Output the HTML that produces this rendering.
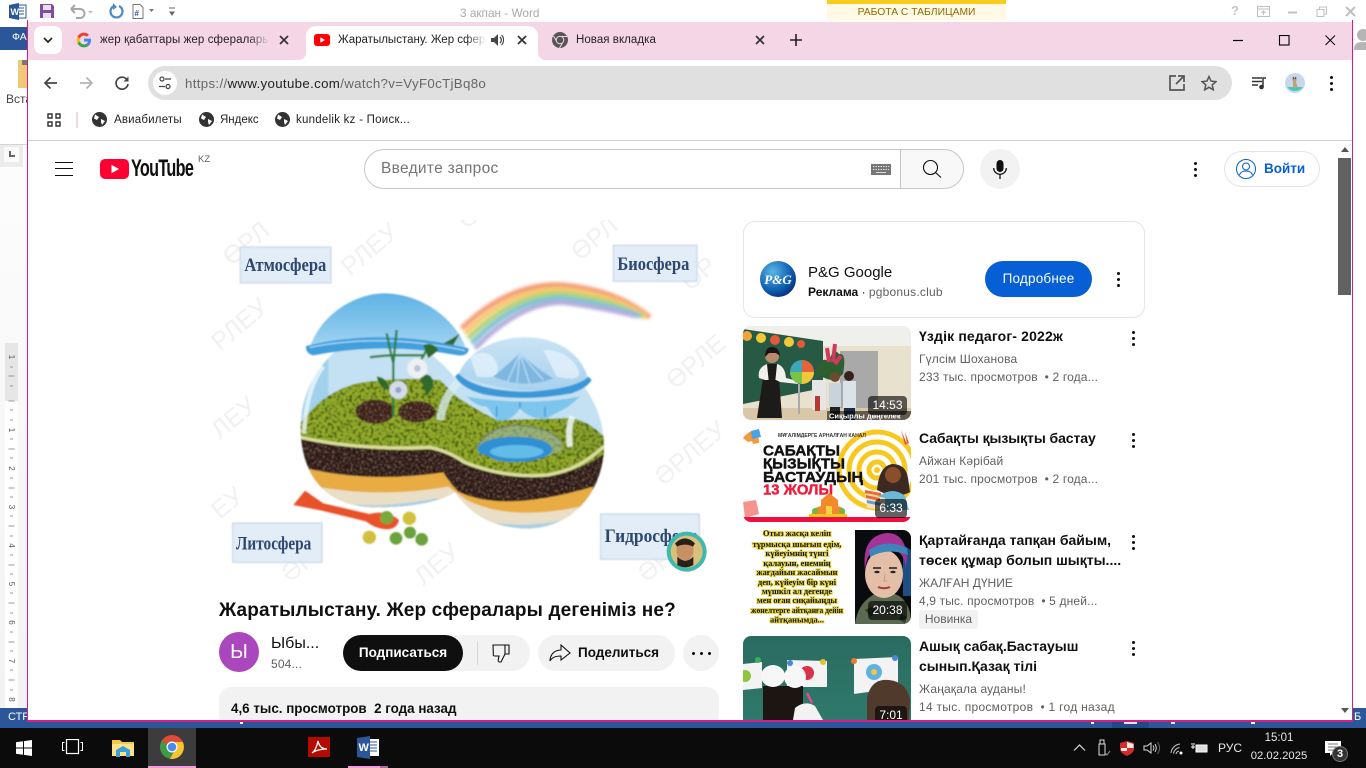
<!DOCTYPE html>
<html lang="ru"><head><meta charset="utf-8"><title>Жаратылыстану. Жер сфералары</title>
<style>
html,body{margin:0;padding:0;background:#fff}
body{position:relative;width:1366px;height:768px;overflow:hidden;font-family:"Liberation Sans","DejaVu Sans",sans-serif;color:#0f0f0f}
.a{position:absolute}
.t{position:absolute;white-space:nowrap}
svg{position:absolute;display:block;overflow:hidden}
.gr{color:#606060;font-size:12px;line-height:16px;letter-spacing:.15px}
.ti{font-size:14px;line-height:20px;font-weight:bold;color:#0f0f0f}
.dur{position:absolute;background:rgba(0,0,0,.62);color:#fff;font-size:12px;line-height:19px;height:19px;border-radius:4px;text-align:center}
.dots{position:absolute;width:3px;height:3px;background:#0f0f0f;border-radius:50%;box-shadow:0 -6px 0 #0f0f0f,0 6px 0 #0f0f0f}
</style></head><body>

<!-- Word chrome -->
<div class="a" style="left:0;top:0;width:1366px;height:22px;background:#fff"></div>
<svg style="left:9px;top:3px" width="18" height="17" viewBox="0 0 18 17"><rect x="6" y="2" width="11" height="13" fill="#fff" stroke="#2b579a"/><path d="M9 5h6M9 8h6M9 11h6" stroke="#2b579a"/><path d="M0 2 10 0v17L0 15z" fill="#2b579a"/><text x="1.5" y="12" font-size="9" font-weight="bold" fill="#fff" font-family="Liberation Sans">W</text></svg>
<svg style="left:39px;top:3px" width="16" height="16" viewBox="0 0 16 16"><path d="M1 1h12l2 2v12H1z" fill="#7d4f9e"/><rect x="4" y="2" width="8" height="5" fill="#e9dff1"/><rect x="4" y="10" width="8" height="5" fill="#e9dff1"/></svg>
<svg style="left:68px;top:3px" width="30" height="16" viewBox="0 0 30 16"><path d="M3 6h9a4 4 0 0 1 0 9H8M3 6l4-4M3 6l4 4" fill="none" stroke="#a7a7a7" stroke-width="2"/><path d="M20 8h5l-2.500 2.500z" fill="#bbb"/></svg>
<svg style="left:108px;top:3px" width="16" height="16" viewBox="0 0 16 16"><path d="M6 3a6 6 0 1 0 5 0" fill="none" stroke="#4a88c7" stroke-width="2.200"/><path d="M5 0v7l4-3z" fill="#4a88c7"/></svg>
<svg style="left:132px;top:4px" width="26" height="15" viewBox="0 0 26 15"><path d="M1 .5h7l3 3v11H1z" fill="#fff" stroke="#777"/><text x="2.500" y="12" font-size="8" font-weight="bold" fill="#2b579a" font-family="Liberation Sans">#</text><path d="M17 5h5l-2.500 3z" fill="#777"/></svg>
<svg style="left:168px;top:7px" width="9" height="10" viewBox="0 0 9 10"><path d="M1 1h6M2 5h4l-2 3z" fill="#666" stroke="#666"/></svg>
<div class="t" style="left:460px;top:6px;font-size:11.800px;line-height:14px;color:#aaa">3 акпан - Word</div>
<div class="a" style="left:827px;top:0;width:179px;height:20px;background:#fff9e6"></div>
<div class="a" style="left:827px;top:0;width:179px;height:4px;background:#f8cc1c"></div>
<div class="t" style="left:827px;width:179px;text-align:center;top:6px;font-size:10.300px;line-height:14px;color:#8a6b00">РАБОТА С ТАБЛИЦАМИ</div>
<div class="t" style="left:1231px;top:3px;font-size:13px;font-weight:bold;color:#c6c6c6">?</div>
<svg style="left:1257px;top:6px" width="110" height="13" viewBox="0 0 110 13"><rect x=".5" y=".5" width="12" height="10" fill="none" stroke="#c0c0c0"/><path d="M.5 3h12M6.500 9V5M4.500 7l2-2 2 2" fill="none" stroke="#c0c0c0"/><path d="M31 6.500h9" stroke="#c0c0c0" stroke-width="2"/><path d="M60 3.500h7v7h-7zM62.500 3.500V1h7v7H67" fill="none" stroke="#c0c0c0"/><path d="M89 1l9 9M98 1l-9 9" stroke="#c0c0c0" stroke-width="2"/></svg>

<div class="a" style="left:0;top:27px;width:27px;height:23px;background:#2b579a"></div>
<div class="t" style="left:12px;top:31px;font-size:10.500px;color:#fff">ФА</div>
<div class="a" style="left:18px;top:60px;width:9px;height:28px;background:#f0c878"></div>
<div class="a" style="left:22px;top:60px;width:5px;height:5px;background:#777"></div>
<div class="t" style="left:6px;top:92px;font-size:12px;color:#444;width:21px;overflow:hidden">Вста</div>
<div class="a" style="left:0;top:144px;width:27px;height:564px;background:linear-gradient(#fdfdfd,#f2f2f2)"></div>
<div class="a" style="left:0;top:144px;width:27px;height:1px;background:#d4d4d4"></div>
<div class="a" style="left:0;top:145px;width:23px;height:22px;background:#ececec"></div>
<div class="a" style="left:4px;top:147px;width:15px;height:15px;background:#fafafa"></div>
<div class="a" style="left:9px;top:151px;width:6px;height:6px;border-left:2px solid #666;border-bottom:2px solid #666;box-sizing:border-box"></div>
<div class="a" style="left:5px;top:343px;width:13px;height:58px;background:#e6e6e6"></div>
<div class="a" style="left:5px;top:401px;width:13px;height:307px;background:#fff"></div>
<svg style="left:5px;top:343px" width="13" height="365" viewBox="0 0 13 365" font-size="8" fill="#555" font-family="Liberation Sans"><path d="M5 24h3M3.500 33h6M5 43h3M5 67h3M5 77h3M3.500 58h6M5 96h3M3.500 106h6M5 115h3M5 135h3M3.500 145h6M5 154h3M5 173h3M3.500 183h6M5 193h3M5 212h3M3.500 222h6M5 231h3M5 250h3M3.500 260h6M5 270h3M5 289h3M3.500 299h6M5 308h3M5 327h3M3.500 337h6M5 347h3" stroke="#999"/><g text-anchor="middle"><text transform="translate(4,14) rotate(90)">1</text><text transform="translate(4,87) rotate(90)">1</text><text transform="translate(4,125.500) rotate(90)">2</text><text transform="translate(4,164) rotate(90)">3</text><text transform="translate(4,202.500) rotate(90)">4</text><text transform="translate(4,241) rotate(90)">5</text><text transform="translate(4,279.500) rotate(90)">6</text><text transform="translate(4,318) rotate(90)">7</text><text transform="translate(4,356.500) rotate(90)">8</text></g></svg>
<div class="a" style="left:0;top:708px;width:1366px;height:20px;background:#2b579a"></div>
<div class="t" style="left:8px;top:711px;font-size:11px;color:#fff">СТРА</div>
<svg style="left:1353px;top:26px" width="13" height="24" viewBox="0 0 13 24"><circle cx="10" cy="9" r="6" fill="#b5b5b5"/><path d="M1 24c0-7 4-8 9-8s6 1 6 8z" fill="#b5b5b5"/></svg>
<div class="t" style="left:1354px;top:711px;font-size:11px;color:#fff">Б</div>

<!-- Taskbar -->
<div class="a" style="left:0;top:728px;width:1366px;height:40px;background:#0b0b0b"></div>
<div class="a" style="left:148px;top:728px;width:48px;height:40px;background:#3c3c3c"></div>
<div class="a" style="left:148px;top:766px;width:48px;height:2px;background:#f49ad6"></div>
<div class="a" style="left:348px;top:766px;width:32px;height:2px;background:#f49ad6"></div>
<div class="a" style="left:380px;top:766px;width:8px;height:2px;background:#b06a9c"></div>
<svg style="left:16px;top:740px" width="16" height="16" viewBox="0 0 16 16"><path d="M0 2.300 7 1.300V7.500H0zM8 1.100 16 0V7.500H8zM0 8.500h7v6.200L0 13.700zM8 8.500h8V16L8 14.900z" fill="#fff"/></svg>
<svg style="left:62px;top:739px" width="21" height="17" viewBox="0 0 21 17"><rect x="4.500" y=".5" width="12" height="14" fill="none" stroke="#fff" stroke-width="1.200"/><path d="M2.500 3.500H.5v8h2M18.500 3.500h2v8h-2" fill="none" stroke="#fff"/></svg>
<svg style="left:112px;top:738px" width="22" height="20" viewBox="0 0 22 20"><path d="M0 2h8l2 2h12v14H0z" fill="#f2c94c"/><path d="M0 6h22v12H0z" fill="#fde28a"/><path d="M4 19V12l7-4 7 4v7h-4v-5H8v5z" fill="#3aa0d8"/></svg>
<svg style="left:160px;top:735px" width="24" height="24" viewBox="0 0 24 24"><circle cx="12" cy="12" r="12" fill="#dd4b39"/><path d="M12 12 1.600 6A12 12 0 0 0 10 23.800L15.500 12z" fill="#3a9a46"/><path d="M12 7h10.800A12 12 0 0 1 10 23.800L15.500 14z" fill="#f5c531"/><circle cx="12" cy="12" r="5.500" fill="#fff"/><circle cx="12" cy="12" r="4.300" fill="#4a8bf0"/></svg>
<svg style="left:308px;top:737px" width="22" height="20" viewBox="0 0 22 20"><rect width="22" height="20" fill="#b30b00"/><path d="M4 16c3-2 5-7 6-12 1 5 4 8 9 8-5 0-11 1-15 4z" fill="none" stroke="#fff" stroke-width="1.300"/></svg>
<svg style="left:357px;top:736px" width="23" height="23" viewBox="0 0 23 23"><rect x="9" y="3" width="13" height="17" fill="#fff"/><path d="M12 6h8M12 9h8M12 12h8M12 15h8" stroke="#2b579a"/><path d="M0 2 13 0v23L0 21z" fill="#2b579a"/><text x="1.500" y="15" font-size="11" font-weight="bold" fill="#fff" font-family="Liberation Sans">W</text></svg>
<svg style="left:1073px;top:743px" width="13" height="9" viewBox="0 0 13 9"><path d="M1 7.500 6.500 2 12 7.500" fill="none" stroke="#ddd" stroke-width="1.200"/></svg>
<svg style="left:1097px;top:739px" width="14" height="17" viewBox="0 0 14 17"><path d="M2 5h6v11H2zM3 1h4v4H3z" fill="none" stroke="#ddd"/><path d="M8 14l2 2 3-4" fill="none" stroke="#999"/></svg>
<svg style="left:1120px;top:741px" width="14" height="15" viewBox="0 0 14 15"><path d="M0 2 7 0l7 2v6c0 3-3 5-7 7-4-2-7-4-7-7z" fill="#d52b2b"/><path d="M7 1v6H1v1c0 1 0 1 .500 2H7v4zM7 7h6.500V3L7 1z" fill="#fff" opacity=".9"/></svg>
<svg style="left:1143px;top:741px" width="17" height="14" viewBox="0 0 17 14"><path d="M1 5h3l4-3v10L4 9H1z" fill="none" stroke="#ddd"/><path d="M10 4.500a4 4 0 0 1 0 5M12 3a7 7 0 0 1 0 8" fill="none" stroke="#ddd"/><path d="M14.500 1a10 10 0 0 1 0 12" fill="none" stroke="#666"/></svg>
<svg style="left:1170px;top:742px" width="13" height="13" viewBox="0 0 13 13"><path d="M1 11a10 10 0 0 1 9-9M3.500 11.500a7 7 0 0 1 6-6M6 12a4 4 0 0 1 3-3" fill="none" stroke="#ccc"/><circle cx="11" cy="11" r="1.500" fill="#fff"/></svg>
<svg style="left:1191px;top:742px" width="17" height="12" viewBox="0 0 17 12"><rect x="5" y="3" width="11" height="7" fill="#ddd" stroke="#fff"/><path d="M0 5h4M2 3v4M1 1v2M3 1v2" stroke="#fff"/></svg>
<div class="t" style="left:1218px;top:741px;font-size:12px;line-height:14px;color:#e8e8e8">РУС</div>
<div class="t" style="left:1252px;width:54px;text-align:center;top:731px;font-size:11.500px;line-height:15px;color:#e8e8e8">15:01</div>
<div class="t" style="left:1250px;width:58px;text-align:center;top:749px;font-size:11.300px;line-height:15px;color:#e8e8e8">02.02.2025</div>
<svg style="left:1325px;top:739px" width="26" height="24" viewBox="0 0 26 24"><path d="M0 2h16v12H8l-3 3v-3H0z" fill="#fff"/><path d="M3 5h10M3 8h10M3 11h7" stroke="#777"/><circle cx="15" cy="15" r="7.500" fill="#333" stroke="#777"/></svg>
<div class="t" style="left:1337px;top:747px;font-size:11px;font-weight:bold;line-height:14px;color:#fff">3</div>

<!-- Chrome window -->
<div class="a" style="left:27px;top:22px;width:1326px;height:699px;background:#fff;overflow:hidden"></div>
<div class="a" style="left:28px;top:22px;width:1325px;height:38px;background:#f5d6e6"></div>
<div class="a" style="left:34px;top:26px;width:28px;height:28px;background:#fff;border-radius:8px"></div>
<svg style="left:43px;top:37px" width="10" height="7" viewBox="0 0 10 7"><path d="M1 1l4 4 4-4" fill="none" stroke="#222" stroke-width="1.700"/></svg>
<svg style="left:76px;top:32px" width="16" height="16" viewBox="0 0 48 48"><path fill="#4285F4" d="M45 24.500c0-1.600-.1-3.100-.4-4.500H24v8.500h11.800c-.5 2.800-2 5.100-4.400 6.700v5.500h7C42.500 37 45 31.300 45 24.500z"/><path fill="#34A853" d="M24 46c5.900 0 10.900-2 14.500-5.300l-7-5.500c-2 1.300-4.500 2.100-7.500 2.100-5.700 0-10.600-3.800-12.300-9H4.400v5.700C8 41.200 15.400 46 24 46z"/><path fill="#FBBC05" d="M11.700 28.300c-.5-1.300-.7-2.800-.7-4.300s.3-3 .7-4.300v-5.700H4.400C2.900 17 2 20.400 2 24s.9 7 2.400 10z"/><path fill="#EA4335" d="M24 10.800c3.200 0 6.100 1.100 8.400 3.300l6.300-6.300C34.900 4.200 29.900 2 24 2 15.400 2 8 6.900 4.400 14l7.300 5.700c1.700-5.100 6.600-8.900 12.300-8.900z"/></svg>
<div class="t" style="left:100px;top:33px;width:168px;overflow:hidden;font-size:11.500px;line-height:15px;color:#222;letter-spacing:.1px">жер қабаттары жер сфералары</div>
<div class="a" style="left:248px;top:30px;width:22px;height:22px;background:linear-gradient(90deg,rgba(245,214,230,0),#f5d6e6)"></div>
<svg style="left:279px;top:35px" width="10" height="10" viewBox="0 0 10 10"><path d="M1 1l8 8M9 1l-8 8" stroke="#333" stroke-width="1.700"/></svg>
<div class="a" style="left:306px;top:26px;width:232px;height:34px;background:#fff;border-radius:10px 10px 0 0"></div>
<div class="a" style="left:298px;top:52px;width:8px;height:8px;background:radial-gradient(circle at 0 0,#f5d6e6 8px,#fff 8.500px)"></div>
<div class="a" style="left:538px;top:52px;width:8px;height:8px;background:radial-gradient(circle at 100% 0,#f5d6e6 8px,#fff 8.500px)"></div>
<svg style="left:314px;top:34px" width="16" height="12" viewBox="0 0 16 12"><rect width="16" height="12" rx="3" fill="#f00"/><path d="M6.300 3.300 11 6l-4.700 2.700z" fill="#fff"/></svg>
<div class="t" style="left:338px;top:33px;width:148px;overflow:hidden;font-size:11.500px;line-height:15px;color:#222">Жаратылыстану. Жер сфералары</div>
<div class="a" style="left:466px;top:30px;width:20px;height:22px;background:linear-gradient(90deg,rgba(255,255,255,0),#fff)"></div>
<svg style="left:491px;top:33px" width="13" height="14" viewBox="0 0 13 14"><path d="M0 5h3l4-4v12L3 9H0z" fill="#444"/><path d="M9 4a4 4 0 0 1 0 6M10.500 2a7 7 0 0 1 0 10" fill="none" stroke="#444" stroke-width="1.200"/></svg>
<svg style="left:517px;top:35px" width="10" height="10" viewBox="0 0 10 10"><path d="M1 1l8 8M9 1l-8 8" stroke="#333" stroke-width="1.700"/></svg>
<svg style="left:552px;top:32px" width="16" height="16" viewBox="0 0 16 16"><circle cx="8" cy="8" r="8" fill="#555"/><path d="M8 4.500h7M5 10 1.500 4M11 10l-3.500 6" stroke="#f5d6e6" stroke-width="1"/><circle cx="8" cy="8" r="3.800" fill="#555" stroke="#f5d6e6"/></svg>
<div class="t" style="left:576px;top:33px;font-size:11.500px;line-height:15px;color:#222;letter-spacing:.05px">Новая вкладка</div>
<svg style="left:755px;top:35px" width="10" height="10" viewBox="0 0 10 10"><path d="M1 1l8 8M9 1l-8 8" stroke="#333" stroke-width="1.700"/></svg>
<svg style="left:790px;top:34px" width="12" height="12" viewBox="0 0 12 12"><path d="M6 0v12M0 6h12" stroke="#222" stroke-width="1.600"/></svg>
<svg style="left:1228px;top:35px" width="112" height="11" viewBox="0 0 112 11"><path d="M5 5.500h10" stroke="#000" stroke-width="1.200"/><rect x="51.500" y=".5" width="9.500" height="9.500" fill="none" stroke="#000" stroke-width="1.100"/><path d="M97.500.5l9.500 9.500M107 .5 97.500 10" stroke="#000" stroke-width="1"/></svg>

<!-- toolbar -->
<div class="a" style="left:28px;top:60px;width:1325px;height:80px;background:#fff;border-radius:8px 8px 0 0"></div>
<svg style="left:43px;top:76px" width="15" height="14" viewBox="0 0 15 14"><path d="M14 7H2M7.500 1.500 2 7l5.500 5.500" fill="none" stroke="#444" stroke-width="1.700"/></svg>
<svg style="left:79px;top:76px" width="15" height="14" viewBox="0 0 15 14"><path d="M1 7h12M7.500 1.500 13 7l-5.500 5.500" fill="none" stroke="#b2b2b2" stroke-width="1.700"/></svg>
<svg style="left:115px;top:76px" width="14" height="14" viewBox="0 0 14 14"><path d="M12 3.800A6 6 0 1 0 13 8" fill="none" stroke="#444" stroke-width="1.700"/><path d="M13.500 .5v5h-5z" fill="#444"/></svg>
<div class="a" style="left:148px;top:66px;width:1084px;height:34px;background:#e0e0e0;border-radius:17px"></div>
<div class="a" style="left:153px;top:71px;width:24px;height:24px;background:#fff;border-radius:50%"></div>
<svg style="left:158px;top:76px" width="14" height="14" viewBox="0 0 14 14"><circle cx="4" cy="3" r="2" fill="none" stroke="#444" stroke-width="1.200"/><circle cx="10" cy="10.500" r="2" fill="none" stroke="#444" stroke-width="1.200"/><path d="M7 3h6M1 10.500h6" stroke="#444" stroke-width="1.200"/></svg>
<div class="t" style="left:185px;top:75px;font-size:13.300px;line-height:17px;color:#666;letter-spacing:.32px">https://<span style="color:#1f1f1f">www.youtube.com</span>/watch?v=VyF0cTjBq8o</div>
<svg style="left:1169px;top:75px" width="16" height="16" viewBox="0 0 16 16"><path d="M7 1H1v14h14V9M9 1h6v6M15 1 7 9" fill="none" stroke="#555" stroke-width="1.700"/></svg>
<svg style="left:1201px;top:75px" width="16" height="16" viewBox="0 0 16 16"><path d="M8 1.500l2 4.600 5 .5-3.800 3.300 1.100 4.900L8 12.300l-4.300 2.500 1.100-4.900L1 6.600l5-.5z" fill="none" stroke="#555" stroke-width="1.500"/></svg>
<svg style="left:1252px;top:76px" width="15" height="14" viewBox="0 0 15 14"><path d="M0 2h10M0 5.500h10M0 9h6" stroke="#333" stroke-width="1.500"/><circle cx="9.500" cy="11" r="2.300" fill="#333"/><path d="M11 11V2h3" fill="none" stroke="#333" stroke-width="1.500"/></svg>
<svg style="left:1285px;top:73px" width="20" height="20" viewBox="0 0 20 20"><circle cx="10" cy="10" r="10" fill="#c9d7ea"/><path d="M2 14h16a10 10 0 0 1-16 0z" fill="#46c9bb"/><path d="M8 15V9l-1-3 1-1h3l1 1-1 3 2 6z" fill="#bda27e"/><path d="M8 4l1 2M11 4 10 6" stroke="#444"/></svg>
<div class="dots" style="left:1330px;top:82px"></div>
<svg style="left:47px;top:113px" width="14" height="14" viewBox="0 0 14 14"><path d="M1 1h4v4H1zM9 1h4v4H9zM1 9h4v4H1zM9 9h4v4H9z" fill="none" stroke="#333" stroke-width="1.400"/></svg>
<div class="a" style="left:76px;top:112px;width:2px;height:16px;background:#f5d6e6"></div>
<svg style="left:92px;top:112px" width="15" height="15" viewBox="0 0 15 15"><circle cx="7.500" cy="7.500" r="7.500" fill="#333"/><path d="M3 2.500 7 5 5 8 2 6.500zM9 7l4 2-3 4-1-3z" fill="#fff"/></svg>
<div class="t" style="left:114px;top:113px;font-size:11.500px;line-height:15px;color:#222;letter-spacing:.2px">Авиабилеты</div>
<svg style="left:199px;top:112px" width="15" height="15" viewBox="0 0 15 15"><circle cx="7.500" cy="7.500" r="7.500" fill="#333"/><path d="M3 2.500 7 5 5 8 2 6.500zM9 7l4 2-3 4-1-3z" fill="#fff"/></svg>
<div class="t" style="left:220px;top:113px;font-size:11.500px;line-height:15px;color:#222">Яндекс</div>
<svg style="left:275px;top:112px" width="15" height="15" viewBox="0 0 15 15"><circle cx="7.500" cy="7.500" r="7.500" fill="#333"/><path d="M3 2.500 7 5 5 8 2 6.500zM9 7l4 2-3 4-1-3z" fill="#fff"/></svg>
<div class="t" style="left:296px;top:113px;font-size:11.500px;line-height:15px;color:#222;letter-spacing:.25px">kundelik kz - Поиск...</div>
<div class="a" style="left:28px;top:140px;width:1325px;height:1px;background:#cfcfcf"></div>

<!-- masthead -->
<div class="a" style="left:55px;top:162px;width:18px;height:1px;background:#0f0f0f;box-shadow:0 6px 0 #0f0f0f,0 13px 0 #0f0f0f"></div>
<svg style="left:100px;top:159px" width="30" height="20" viewBox="0 0 30 20"><rect width="29" height="20" rx="5" fill="#ff0033"/><path d="M11.500 5.700 19 10l-7.500 4.300z" fill="#fff"/></svg>
<div class="t" style="left:131px;top:156px;font-size:24px;line-height:26px;letter-spacing:-1px;font-weight:bold;color:#0f0f0f;transform:scaleX(.675);transform-origin:0 0">YouTube</div>
<div class="t" style="left:198px;top:154px;font-size:9.500px;line-height:12px;color:#606060">KZ</div>
<div class="a" style="left:364px;top:149px;width:537px;height:40px;box-sizing:border-box;border:1px solid #c6c6c6;border-radius:20px 0 0 20px;background:#fff"></div>
<div class="t" style="left:381px;top:160px;font-size:15.500px;line-height:18px;color:#757575;letter-spacing:.3px">Введите запрос</div>
<svg style="left:871px;top:164px" width="20" height="11" viewBox="0 0 20 11"><rect width="20" height="11" fill="#777"/><path d="M2 2.500h16M2 5.500h16" stroke="#ddd" stroke-dasharray="1.500 1"/><path d="M5 8.500h10" stroke="#ddd"/></svg>
<div class="a" style="left:900px;top:149px;width:64px;height:40px;box-sizing:border-box;border:1px solid #c6c6c6;border-radius:0 20px 20px 0;background:#f8f8f8"></div>
<svg style="left:922px;top:159px" width="21" height="20" viewBox="0 0 21 20"><circle cx="8.500" cy="8.500" r="7" fill="none" stroke="#0f0f0f" stroke-width="1.100"/><path d="M13.500 13.500l5.500 5" stroke="#0f0f0f" stroke-width="1.100"/></svg>
<div class="a" style="left:980px;top:149px;width:40px;height:40px;border-radius:50%;background:#f2f2f2"></div>
<svg style="left:993px;top:160px" width="14" height="19" viewBox="0 0 14 19"><rect x="3.500" y="0" width="7" height="12" rx="3.500" fill="#0f0f0f"/><path d="M.7 8a6.300 6.300 0 0 0 12.600 0M7 14.500V19" fill="none" stroke="#0f0f0f" stroke-width="1.300"/></svg>
<div class="dots" style="left:1194px;top:168px"></div>
<div class="a" style="left:1224px;top:151px;width:96px;height:36px;box-sizing:border-box;border:1px solid #e5e5e5;border-radius:18px"></div>
<svg style="left:1236px;top:159px" width="20" height="20" viewBox="0 0 20 20"><circle cx="10" cy="10" r="9.500" fill="none" stroke="#065fd4"/><circle cx="10" cy="7.500" r="3.500" fill="none" stroke="#065fd4"/><path d="M3.500 16c1-3 4-4 6.500-4s5.500 1 6.500 4" fill="none" stroke="#065fd4"/></svg>
<div class="t" style="left:1264px;top:160px;font-size:13.500px;line-height:18px;font-weight:bold;color:#065fd4">Войти</div>

<!-- video image -->
<svg style="left:210px;top:220px" width="520" height="370" viewBox="0 0 1560 1110">
<defs>
<filter id="b1" x="-5%" y="-5%" width="110%" height="110%"><feGaussianBlur stdDeviation="2.200"/></filter>
<filter id="b2" x="-10%" y="-20%" width="120%" height="140%"><feGaussianBlur stdDeviation="5"/></filter>
<filter id="tex" color-interpolation-filters="sRGB" x="0" y="0" width="100%" height="100%"><feTurbulence type="fractalNoise" baseFrequency=".11" numOctaves="3" seed="3" result="n"/><feColorMatrix in="n" type="matrix" values="0 0 0 0 .27  0 0 0 0 .33  0 0 0 0 .06  0 0 0 4 -1.900" result="d"/><feComposite in="d" in2="SourceAlpha" operator="in" result="dm"/><feMerge><feMergeNode in="SourceGraphic"/><feMergeNode in="dm"/></feMerge></filter>
<filter id="tex2" color-interpolation-filters="sRGB" x="0" y="0" width="100%" height="100%"><feTurbulence type="fractalNoise" baseFrequency=".18" numOctaves="2" seed="8" result="n"/><feColorMatrix in="n" type="matrix" values="0 0 0 0 .55  0 0 0 0 .45  0 0 0 0 .38  0 0 0 4 -2.100" result="d"/><feComposite in="d" in2="SourceAlpha" operator="in" result="dm"/><feMerge><feMergeNode in="SourceGraphic"/><feMergeNode in="dm"/></feMerge></filter>
<linearGradient id="dome" x1="0" y1="0" x2="0" y2="1"><stop offset="0" stop-color="#5fb2e6"/><stop offset=".6" stop-color="#86c6ec"/><stop offset="1" stop-color="#a5d6f0"/></linearGradient>
<linearGradient id="dome2" x1="0" y1="0" x2="0" y2="1"><stop offset="0" stop-color="#c9e3f4"/><stop offset="1" stop-color="#a8d2ef"/></linearGradient>
<clipPath id="bowl"><path d="M272 620C272 760 340 860 500 862C620 862 700 840 735 815C780 880 850 925 950 925C1090 925 1180 810 1182 680C1182 540 1090 430 950 375C860 375 780 420 740 480C700 430 620 345 505 345C370 345 272 490 272 620z"/></clipPath>
</defs>
<rect x="27" width="1500" height="1110" fill="#fff"/>
<g font-size="76" font-family="Liberation Sans" fill="#d9d9d9" opacity=".38">
<text transform="translate(65,140) rotate(-40)">ӨРЛ</text><text transform="translate(420,170) rotate(-40)">РЛЕУ</text><text transform="translate(1110,125) rotate(-40)">ӨРЛ</text><text transform="translate(1440,215) rotate(-40)">ӨР</text><text transform="translate(30,395) rotate(-40)">РЛЕУ</text><text transform="translate(1395,510) rotate(-40)">ӨРЛЕ</text><text transform="translate(30,660) rotate(-40)">ЛЕУ</text><text transform="translate(1360,800) rotate(-40)">ӘРЛЕУ</text><text transform="translate(30,900) rotate(-40)">ЕУ</text><text transform="translate(240,1090) rotate(-40)">ӘР</text><text transform="translate(640,1100) rotate(-40)">ЛЕУ</text><text transform="translate(1310,1090) rotate(-40)">ӘРЛ</text><text transform="translate(770,30) rotate(-40)">ӨР</text></g>
<!-- rainbow -->
<g fill="none" stroke-width="15" filter="url(#b2)" opacity=".85">
<path d="M755 325Q900 185 1060 195Q1220 210 1320 292" stroke="#f48a5f"/>
<path d="M765 340Q905 200 1060 208Q1210 222 1310 292" stroke="#f6c05a"/>
<path d="M775 355Q915 215 1060 221Q1200 236 1300 290" stroke="#a6cc5c"/>
<path d="M785 370Q920 230 1060 234Q1190 250 1290 288" stroke="#66bbcc"/>
<path d="M795 385Q930 245 1060 247Q1175 262 1280 288" stroke="#a79fd6"/>
</g>
<g filter="url(#b1)">
<g clip-path="url(#bowl)">
<rect x="260" y="340" width="940" height="600" fill="#c3e1f2"/>
<rect x="275" y="400" width="80" height="240" fill="#8cc7e8" opacity=".6"/>
<path d="M260 625Q330 520 440 490Q560 470 690 480L740 530Q800 570 860 600L1060 595Q1130 590 1190 660V730H260z" fill="#93ab2c" filter="url(#tex)"/>
<path d="M260 650Q450 700 660 688Q720 700 760 730Q880 780 1010 770Q1110 755 1190 680V960H260z" fill="#2a1915" filter="url(#tex2)"/>
<path d="M290 745Q480 790 700 757Q720 790 745 815Q880 880 1150 800L1100 950H290z" fill="#e8ac42"/>
<path d="M320 800Q520 835 715 800L770 840Q900 905 1110 860V950H320z" fill="#e9dfc6"/>
<path d="M400 850Q520 865 680 835L720 860H400zM830 905Q950 925 1060 900V930H830z" fill="#a9d0e6"/>
<path d="M800 680Q830 618 925 615Q1030 620 1062 672L1040 720H820z" fill="#9db6a8" opacity=".6"/>
<ellipse cx="915" cy="688" rx="112" ry="38" fill="#2f8fd2"/>
<ellipse cx="920" cy="695" rx="80" ry="20" fill="#62bce8"/>
<path d="M805 675Q840 620 920 615Q1030 625 1060 670" fill="none" stroke="#6f7e6a" stroke-width="4"/>
<path d="M740 680Q790 700 830 705Q900 755 1035 700L1190 640V695Q1110 755 1010 770Q880 780 760 730z" fill="#93ab2c" filter="url(#tex)"/>
<path d="M1060 595Q1130 590 1190 660V700L1060 710Q1050 650 1060 595z" fill="#8aa42e" filter="url(#tex)"/>
<ellipse cx="495" cy="575" rx="58" ry="36" fill="#3a1f17" filter="url(#tex2)"/><ellipse cx="620" cy="575" rx="56" ry="32" fill="#3a1f17" filter="url(#tex2)"/>
<path d="M272 652Q450 692 660 682Q720 695 760 725Q880 775 1010 765Q1110 750 1182 678" fill="none" stroke="#d8dd9a" stroke-width="10"/>
</g>
<path d="M282 640Q290 500 340 440" fill="none" stroke="#eef7fb" stroke-width="13" opacity=".8"/>
<path d="M690 600Q700 530 750 480" fill="none" stroke="#d7edf4" stroke-width="24" opacity=".75"/>
<path d="M1080 680Q1072 620 1088 590" fill="none" stroke="#f3fafc" stroke-width="18" opacity=".85"/>
<!-- left lid -->
<path d="M300 380C340 270 450 218 525 220C640 222 740 300 770 390C650 350 430 345 300 380z" fill="url(#dome)"/>
<path d="M288 378Q520 322 776 385Q776 408 745 406Q520 365 310 406Q286 400 288 378z" fill="#3f9fdd"/>
<path d="M300 382Q520 338 765 392" fill="none" stroke="#c3e6f8" stroke-width="3"/>
<!-- plant -->
<path d="M550 590V430M480 412q40-6 80-6h85M530 340q10 50 20 90M560 330l-10 100M650 390l-40 70" stroke="#2c8040" stroke-width="7" fill="none"/>
<path d="M640 375q30-10 45 15l-30 25zM630 470q40-20 40 30l-20 30zM500 470q30 0 40 40q-30 0-40-40zM700 370q30-15 50-30l-20 35z" fill="#2f6b2c"/>
<circle cx="622" cy="445" r="30" fill="#eef0f2"/><circle cx="622" cy="445" r="10" fill="#b6c6dc"/>
<circle cx="565" cy="510" r="27" fill="#d4dcea"/><circle cx="565" cy="510" r="9" fill="#8ea3c6"/>
<!-- right lid -->
<path d="M745 465C770 395 860 350 950 352C1050 352 1120 410 1135 480Q960 550 745 465z" fill="url(#dome2)"/>
<path d="M850 470Q910 420 930 398Q970 440 1030 475Q940 510 850 470z" fill="#7fb7e0"/>
<path d="M930 400l-40 90M930 400l-10 100M930 400l30 95M930 400l70 80" stroke="#b6dbf4" stroke-width="4"/>
<path d="M780 410q60-30 80 20t-60 40zM1000 390q70 0 100 50t-60 30z" fill="#e4f1fb" opacity=".8"/>
<path d="M735 470Q760 510 830 525Q950 545 1085 520Q1130 505 1145 480L1135 470Q1100 505 960 515Q800 515 745 460z" fill="#3a98d8"/>
<path d="M770 530Q800 560 830 560L860 600Q900 610 930 565Q960 600 1010 595L1075 560L1110 530Q950 560 770 530z" fill="#7cc5ec"/>
<path d="M860 560v30M930 545v20M1005 560v30" stroke="#3a98d8" stroke-width="4"/>
<!-- spoon -->
<path d="M250 855 285 812 340 850 478 882Q530 868 567 900Q560 932 520 927Q490 922 468 904L335 872z" fill="#e9512a"/>
<circle cx="530" cy="893" r="20" fill="#79a83a"/><circle cx="598" cy="895" r="20" fill="#d2c03c"/><circle cx="478" cy="952" r="20" fill="#d2c03c"/><circle cx="558" cy="955" r="19" fill="#6ca23a"/><circle cx="600" cy="938" r="18" fill="#6ca23e"/><circle cx="635" cy="958" r="19" fill="#6ca23a"/>
<!-- labels -->
<g stroke="#bcd0e6" stroke-width="3" fill="#e3edf8"><rect x="91" y="81" width="272" height="108"/><rect x="1210" y="76" width="251" height="108"/><rect x="68" y="909" width="268" height="118"/><rect x="1172" y="882" width="296" height="136"/></g>
</g>
<g font-family="Liberation Serif" font-weight="bold" font-size="56" fill="#2c4770">
<text x="103" y="153" textLength="246" lengthAdjust="spacingAndGlyphs">Атмосфера</text>
<text x="1222" y="150" textLength="216" lengthAdjust="spacingAndGlyphs">Биосфера</text>
<text x="78" y="988" textLength="226" lengthAdjust="spacingAndGlyphs">Литосфера</text>
<text x="1184" y="966" textLength="280" lengthAdjust="spacingAndGlyphs">Гидросфера</text>
</g>
<circle cx="1430" cy="995" r="60" fill="#3db9b0"/><circle cx="1430" cy="995" r="48" fill="#d9c07c"/><ellipse cx="1425" cy="990" rx="26" ry="32" fill="#c79163"/><path d="M1395 970q30-30 60 0l-6 10q-24-12-48 0zM1402 1010q24 25 48 0v25q-24 14-48 0z" fill="#2b2019"/>
</svg>

<!-- title & actions -->
<div class="t" style="left:219px;top:599px;font-size:19px;line-height:24px;font-weight:bold;color:#0f0f0f;letter-spacing:.14px">Жаратылыстану. Жер сфералары дегеніміз не?</div>
<div class="a" style="left:219px;top:632px;width:40px;height:40px;border-radius:50%;background:#ab47bc;color:#fff;font-size:20px;line-height:40px;text-align:center">Ы</div>
<div class="t" style="left:271px;top:634px;font-size:16px;line-height:20px;color:#0f0f0f">Ыбы...</div>
<div class="t gr" style="left:271px;top:656px">504...</div>
<div class="a" style="left:343px;top:635px;width:187px;height:36px;background:#f2f2f2;border-radius:18px"></div>
<div class="a" style="left:343px;top:635px;width:120px;height:36px;background:#0f0f0f;border-radius:18px;color:#fff;font-size:13.500px;line-height:36px;text-align:center;font-weight:bold">Подписаться</div>
<div class="a" style="left:477px;top:641px;width:1px;height:24px;background:#d6d6d6"></div>
<svg style="left:492px;top:644px" width="19" height="19" viewBox="0 0 19 19"><path d="M1 1h12v9l-4 8h-1.500c-1 0-1.500-1-1.300-2l.8-4H2.500c-1 0-1.500-1-1.200-2zM13 1h4v9h-4" fill="none" stroke="#0f0f0f" stroke-width="1.100"/></svg>
<div class="a" style="left:538px;top:635px;width:137px;height:36px;background:#f2f2f2;border-radius:18px"></div>
<svg style="left:549px;top:644px" width="22" height="18" viewBox="0 0 22 18"><path d="M12 1l9 8-9 7v-4C7 12 3 13 1 17c0-6 4-11 11-11z" fill="none" stroke="#0f0f0f" stroke-width="1.100"/></svg>
<div class="t" style="left:578px;top:644px;font-size:13.500px;line-height:18px;font-weight:bold;color:#0f0f0f">Поделиться</div>
<div class="a" style="left:683px;top:635px;width:36px;height:36px;background:#f2f2f2;border-radius:50%"></div>
<div class="a" style="left:692px;top:652px;width:3px;height:3px;background:#0f0f0f;border-radius:50%;box-shadow:8px 0 0 #0f0f0f,16px 0 0 #0f0f0f"></div>
<div class="a" style="left:219px;top:687px;width:500px;height:40px;background:#f2f2f2;border-radius:12px"></div>
<div class="t" style="left:231px;top:700px;font-size:13.400px;line-height:18px;font-weight:bold;color:#0f0f0f">4,6 тыс. просмотров&nbsp; 2 года назад</div>

<!-- ad card -->
<div class="a" style="left:743px;top:221px;width:402px;height:97px;box-sizing:border-box;border:1px solid #e5e5e5;border-radius:12px"></div>
<svg style="left:760px;top:261px" width="36" height="36" viewBox="0 0 36 36"><defs><radialGradient id="pg" cx=".35" cy=".3" r=".85"><stop offset="0" stop-color="#5ab6e6"/><stop offset=".6" stop-color="#0f5fb0"/><stop offset="1" stop-color="#04196b"/></radialGradient></defs><circle cx="18" cy="18" r="18" fill="url(#pg)"/><text x="18" y="23" text-anchor="middle" font-size="13" font-style="italic" font-weight="bold" fill="#fff" font-family="Liberation Serif">P&amp;G</text></svg>
<div class="t" style="left:808px;top:263px;font-size:15px;line-height:19px;color:#0f0f0f">P&amp;G Google</div>
<div class="t" style="left:808px;top:284px;font-size:12px;line-height:16px;color:#0f0f0f"><b>Реклама</b> · <span style="color:#606060;letter-spacing:.2px">pgbonus.club</span></div>
<div class="a" style="left:985px;top:261px;width:107px;height:36px;background:#065fd4;border-radius:18px;color:#fff;font-size:13.500px;line-height:36px;text-align:center;letter-spacing:.2px">Подробнее</div>
<div class="dots" style="left:1117px;top:278px"></div>

<!-- thumb 1 -->
<svg style="left:743px;top:326px" width="168" height="94" viewBox="0 0 168 94"><defs><clipPath id="r1"><rect width="168" height="94" rx="8"/></clipPath></defs><g clip-path="url(#r1)">
<rect width="168" height="94" fill="#e8e1cd"/><rect width="168" height="20" fill="#efefeb"/><path d="M0 3 80 15V62L0 78z" fill="#275a45"/><rect x="97" y="25" width="38" height="69" fill="#a9a9a9"/><path d="M0 82h168v12H0z" fill="#d9c8a8"/>
<circle cx="4" cy="10" r="5" fill="#f2a33a"/><circle cx="18" cy="12" r="5" fill="#f2c83a"/><circle cx="32" cy="14" r="5" fill="#e4583a"/><circle cx="46" cy="16" r="5" fill="#f2c83a"/><circle cx="58" cy="18" r="4" fill="#e4583a"/>
<path d="M14 92l6-40h16l3 40z" fill="#1d1a1a"/><path d="M16 52q-2-10 8-14h10q8 2 9 14l12 3v3l-18-2-4-2H22z" fill="#f2f0ec"/><path d="M24 38h10l-2 20h-6z" fill="#1d1a1a"/><circle cx="29" cy="30" r="7" fill="#b98a6b"/><path d="M22 31q0-10 7-10t8 9l-4-3h-7z" fill="#1b1412"/>
<circle cx="59" cy="46" r="12" fill="#3ca7b5"/><path d="M59 34a12 12 0 0 1 12 12H59z" fill="#e8623c"/><path d="M59 46h12a12 12 0 0 1-12 12z" fill="#f2c83a"/><path d="M59 46v12a12 12 0 0 1-12-12z" fill="#7bc24b"/><path d="M56 58v30" stroke="#aaa" stroke-width="2"/>
<path d="M72 48q6-20 14-12 4-16 10-8 8-2 4 20-8 8-16 5z" fill="#2e5f30"/><path d="M84 22l2 14M92 18l-2 18M98 30l-6 8" stroke="#cf3b5c" stroke-width="4"/><rect x="69" y="54" width="14" height="30" fill="#e6e6e6"/><rect x="72" y="70" width="5" height="15" fill="#b83a30"/>
<rect x="86" y="57" width="12" height="24" fill="#c8d3dc"/><rect x="87" y="81" width="10" height="13" fill="#222"/><circle cx="92" cy="51" r="5" fill="#6e4a30"/><rect x="100" y="55" width="13" height="27" fill="#dbe3ea"/><rect x="101" y="82" width="11" height="12" fill="#1e2a45"/><circle cx="106" cy="50" r="5" fill="#352218"/>
<rect x="84" y="85" width="84" height="9" fill="rgba(0,0,0,.55)"/><text x="86" y="92.500" font-size="7.500" font-weight="bold" fill="#fff" font-family="Liberation Sans">Сиқырлы дөңгелек</text>
</g></svg>
<div class="dur" style="left:868px;top:396px;width:39px">14:53</div>
<!-- thumb 2 -->
<svg style="left:743px;top:428px" width="168" height="94" viewBox="0 0 168 94"><defs><clipPath id="r2"><rect width="168" height="94" rx="8"/></clipPath></defs><g clip-path="url(#r2)">
<rect width="168" height="94" fill="#fff"/>
<g fill="none" stroke="#f8c81e" stroke-width="5"><circle cx="134" cy="42" r="8"/><circle cx="134" cy="42" r="18"/><circle cx="134" cy="42" r="28"/><circle cx="134" cy="42" r="38"/></g>
<circle cx="134" cy="42" r="3" fill="#f8c81e"/>
<text x="35" y="9" textLength="88" lengthAdjust="spacingAndGlyphs" font-size="5" font-weight="bold" fill="#333" font-family="Liberation Sans">МҰҒАЛІМДЕРГЕ АРНАЛҒАН КАНАЛ</text>
<g font-family="Liberation Sans" font-weight="bold" font-size="14.500" fill="#111" stroke="#111" stroke-width=".4"><text x="20" y="27.500" textLength="77" lengthAdjust="spacingAndGlyphs">САБАҚТЫ</text><text x="20" y="40.500" textLength="82" lengthAdjust="spacingAndGlyphs">ҚЫЗЫҚТЫ</text><text x="20" y="54" textLength="100" lengthAdjust="spacingAndGlyphs">БАСТАУДЫҢ</text><text x="20" y="66.500" textLength="70" lengthAdjust="spacingAndGlyphs" fill="#ee1b3c" stroke="#ee1b3c">13 ЖОЛЫ</text></g>
<path d="M0 10q6-8 14-7l1 9-10 2zM6 4l9-2 1 13-6 1z" fill="#f29a3c"/><path d="M8 3l8-2 2 8-9 2z" fill="#4aa3e0"/>
<path d="M0 74l13-2 3 14-14 4z" fill="#f5938f"/><path d="M67 88l5-8 6-2v-6l8-7 9 7v6l5 2 3 8z" fill="#f28a2c"/><path d="M66 86h38v3H66z" fill="#f2c81e"/><circle cx="72" cy="83" r="3" fill="#6cb843"/><circle cx="99" cy="83" r="3" fill="#6cb843"/><rect x="83" y="78" width="6" height="8" fill="#f5d44a"/>
<path d="M134 62q2-24 15-26 14 0 16 14l2 14q-14 8-33-2z" fill="#3c2a22"/><circle cx="150" cy="47" r="8" fill="#8a4e2c"/><path d="M136 68q14-10 26 0l4 14h-30z" fill="#6bb7d8"/><path d="M122 66l20 4v12l-18-2z" fill="#f8e2c0"/><path d="M122 62l16 3v3l-16-3zM123 67l14 3v3l-14-3z" fill="#e8673c"/><path d="M124 72l14 3v3l-14-3z" fill="#5aa0d0"/>
<path d="M158 2l6 14-2 1zM162 4l2 12 2-1z" fill="#e8572c"/><path d="M0 89h168v5H0z" fill="#ee0f3f"/></g></svg>
<div class="dur" style="left:875px;top:499px;width:32px">6:33</div>
<!-- thumb 3 -->
<svg style="left:743px;top:530px" width="168" height="94" viewBox="0 0 168 94"><defs><clipPath id="r3"><rect width="168" height="94" rx="8"/></clipPath></defs><g clip-path="url(#r3)">
<rect width="116" height="94" fill="#fff"/><rect x="112" width="56" height="94" fill="#0a0b0e"/>
<g font-family="Liberation Serif" font-weight="bold" font-size="8.400" text-anchor="middle" fill="#151515" stroke="#e9d84c" stroke-width="2" paint-order="stroke"><text x="54" y="6">Отыз жасқа келіп</text><text x="54" y="17">тұрмысқа шығып едім,</text><text x="54" y="26">күйеуімнің түнгі</text><text x="54" y="36">қалауын, енемнің</text><text x="54" y="45">жағдайын жасаймын</text><text x="54" y="55">деп, күйеуім бір күні</text><text x="54" y="64">мүшкіл ал дегенде</text><text x="54" y="73">мен оған сиқайыңды</text><text x="54" y="83" textLength="92" lengthAdjust="spacingAndGlyphs">жөнелтерге айтқанға дейін</text><text x="54" y="92.500">айтқанымда...</text></g>
<path d="M112 94q3-22 20-30h20q16 6 16 30z" fill="#5d6a52"/><path d="M122 80l8-4 4 6-6 5zM150 74l6 6-4 6-6-5zM158 84l6 3-2 6-6-3z" fill="#2e3a2a"/>
<path d="M160 15l8 5v46h-8z" fill="#1d4f86"/>
<ellipse cx="141" cy="44" rx="19" ry="24" fill="#e4bfa8"/>
<path d="M122 40Q118 6 144 3q18 0 20 24l-1 10q-2-12-8-15-16-4-28 2-4 5-5 16z" fill="#a63396"/>
<path d="M126 20q18-12 38-2l1 7q-20-8-38 2z" fill="#3d85b8"/>
<path d="M130 38h8M146 38h8" stroke="#1c1c1c" stroke-width="1.600"/><ellipse cx="134" cy="42" rx="2.700" ry="1.300" fill="#222"/><ellipse cx="150" cy="42" rx="2.700" ry="1.300" fill="#222"/><path d="M135 57q6 2.500 12 0" stroke="#a33b3b" stroke-width="2" fill="none"/><path d="M142 44l-1 7h3" stroke="#c99a80" fill="none"/>
</g></svg>
<div class="dur" style="left:868px;top:601px;width:39px">20:38</div>
<!-- thumb 4 -->
<svg style="left:743px;top:636px" width="168" height="84" viewBox="0 0 168 84"><defs><clipPath id="r4"><rect width="168" height="94" rx="8"/></clipPath><linearGradient id="bd" x1="0" y1="0" x2="0" y2="1"><stop offset="0" stop-color="#2a6b60"/><stop offset="1" stop-color="#2f7b6d"/></linearGradient></defs><g clip-path="url(#r4)">
<rect width="168" height="94" fill="url(#bd)"/>
<path d="M0 28 19 26V52L0 54zM44 24 84 25V51L44 51zM111 23 155 21V52L111 58z" fill="#f3f3f3"/><circle cx="2" cy="40" r="6" fill="#8fc43c"/><circle cx="64" cy="37" r="7" fill="#d8334a"/><circle cx="131" cy="36" r="8" fill="#5fb0e5"/><circle cx="131" cy="36" r="3" fill="#f0c838"/><circle cx="15" cy="24" r="3" fill="#35b058"/><circle cx="47" cy="27" r="3" fill="#4a86d8"/><circle cx="80" cy="26" r="3" fill="#e8c030"/><circle cx="111" cy="25" r="3" fill="#ec7a30"/><circle cx="152" cy="22" r="3" fill="#4a86d8"/>
<path d="M20 84V50h40v34z" fill="#1c1512"/><ellipse cx="30" cy="40" rx="12" ry="11" fill="#f7f7f7"/><ellipse cx="52" cy="41" rx="11" ry="11" fill="#f7f7f7"/><path d="M52 72q10-8 20-2l8 14H50z" fill="#f2f2f2"/><path d="M64 57l5 10" stroke="#e94a8a" stroke-width="2.500"/>
<path d="M124 84V62q4-20 22-18t21 20l-1 20z" fill="#4f3a2c"/></g></svg>
<div class="dur" style="left:875px;top:706px;width:32px">7:01</div>

<!-- list text -->
<div class="t ti" style="left:919px;top:326px;letter-spacing:.15px">Үздік педагог- 2022ж</div>
<div class="t gr" style="left:919px;top:351px">Гүлсім Шоханова</div>
<div class="t gr" style="left:919px;top:369px">233 тыс. просмотров &nbsp;• 2 года...</div>
<div class="dots" style="left:1132px;top:337px"></div>
<div class="t ti" style="left:919px;top:428px;letter-spacing:-.08px">Сабақты қызықты бастау</div>
<div class="t gr" style="left:919px;top:453px">Айжан Кәрібай</div>
<div class="t gr" style="left:919px;top:471px">201 тыс. просмотров &nbsp;• 2 года...</div>
<div class="dots" style="left:1132px;top:439px"></div>
<div class="t ti" style="left:919px;top:530px">Қартайғанда тапқан байым,</div>
<div class="t ti" style="left:919px;top:550px">төсек құмар болып шықты....</div>
<div class="t gr" style="left:919px;top:575px;letter-spacing:0">ЖАЛҒАН ДҮНИЕ</div>
<div class="t gr" style="left:919px;top:593px">4,9 тыс. просмотров &nbsp;• 5 дней...</div>
<div class="a" style="left:919px;top:610px;width:59px;height:19px;background:#f2f2f2;border-radius:3px;color:#606060;font-size:12px;line-height:19px;text-align:center">Новинка</div>
<div class="dots" style="left:1132px;top:541px"></div>
<div class="t ti" style="left:919px;top:636px">Ашық сабақ.Бастауыш</div>
<div class="t ti" style="left:919px;top:656px">сынып.Қазақ тілі</div>
<div class="t gr" style="left:919px;top:681px">Жаңақала ауданы!</div>
<div class="t gr" style="left:919px;top:699px;letter-spacing:.28px">14 тыс. просмотров &nbsp;• 1 год назад</div>
<div class="dots" style="left:1132px;top:647px"></div>

<!-- scrollbar -->
<div class="a" style="left:1338px;top:141px;width:14px;height:580px;background:#fff"></div>
<div class="a" style="left:1338px;top:158px;width:13px;height:137px;background:#616161"></div>
<svg style="left:1340px;top:147px" width="10" height="6" viewBox="0 0 10 6"><path d="M5 0l4 5H1z" fill="#555"/></svg>
<svg style="left:1340px;top:708px" width="10" height="6" viewBox="0 0 10 6"><path d="M5 5 1 0h8z" fill="#555"/></svg>

<!-- window border, bottom cut-off -->
<div class="a" style="left:0;top:721px;width:1366px;height:7px;background:#2b579a"></div>
<div class="a" style="left:1112px;top:721px;width:37px;height:7px;background:#1f4a87"></div>
<div class="a" style="left:1124px;top:722px;width:13px;height:2px;background:#dfe6f0"></div>
<div class="a" style="left:240px;top:722px;width:3px;height:2px;background:#fff"></div>
<div class="a" style="left:1091px;top:722px;width:3px;height:2px;background:#fff"></div>
<div class="a" style="left:1171px;top:722px;width:4px;height:2px;background:#dfe6f0"></div>
<div class="a" style="left:1251px;top:722px;width:4px;height:2px;background:#fff"></div>
<div class="a" style="left:27px;top:20px;width:1px;height:701px;background:#d81b85"></div>
<div class="a" style="left:1352px;top:20px;width:1px;height:701px;background:#d81b85"></div>
<div class="a" style="left:27px;top:720px;width:1326px;height:2px;background:#d81b85"></div>
</body></html>
